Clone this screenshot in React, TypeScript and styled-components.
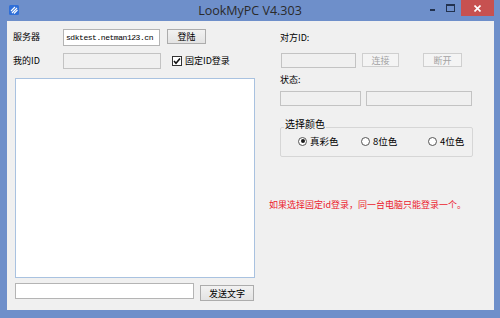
import React, { useState } from 'react';
import styled, { createGlobalStyle } from 'styled-components';

const GlobalStyle = createGlobalStyle`
  html, body {
    margin: 0;
    padding: 0;
    background: #ffffff;
  }
  body {
    font-family: "Noto Sans CJK SC", "Noto Sans", sans-serif;
  }
`;

const Window = styled.div`
  width: 500px;
  height: 318px;
  background: #6e8fca;
  display: flex;
  flex-direction: column;
  box-sizing: border-box;
  overflow: hidden;
`;

const TitleBar = styled.div`
  height: 21px;
  display: flex;
  align-items: flex-start;
  position: relative;
`;

const AppIcon = styled.div`
  width: 10px;
  height: 10px;
  margin: 5px 0 0 9px;
  display: flex;
`;

const Title = styled.div`
  position: absolute;
  left: 0;
  right: 0;
  top: 3px;
  text-align: center;
  font-family: "Open Sans", "Noto Sans", sans-serif;
  font-size: 12.5px;
  line-height: 15px;
  color: #2a2a2a;
  pointer-events: none;
`;

const Controls = styled.div`
  margin-left: auto;
  margin-right: 6px;
  display: flex;
  align-items: flex-start;
  position: relative;
  z-index: 1;
`;

const CtrlButton = styled.div<{ w: number; danger?: boolean }>`
  width: ${({ w }) => w}px;
  height: 16px;
  display: flex;
  align-items: center;
  justify-content: center;
  background: ${({ danger }) => (danger ? '#c75150' : 'transparent')};
  color: #ffffff;
`;

const MinGlyph = styled.div`
  width: 5px;
  height: 2px;
  margin-top: 4px;
  background: #22324f;
`;

const MaxGlyph = styled.div`
  width: 7px;
  height: 5px;
  margin-top: -1px;
  border: 1px solid #22324f;
  border-top-width: 2px;
`;

const Client = styled.div`
  flex: 1;
  margin: 0 6px 8px 7px;
  background: #f0f0f0;
  display: flex;
  font-size: 9px;
  color: #000;
`;

const LeftPane = styled.div`
  width: 248px;
  padding: 8px 0 0 6px;
  box-sizing: border-box;
  display: flex;
  flex-direction: column;
`;

const RightPane = styled.div`
  flex: 1;
  padding: 9px 0 0 25px;
  display: flex;
  flex-direction: column;
`;

const Row = styled.div<{ gap?: number; mt?: number }>`
  display: flex;
  align-items: flex-start;
  gap: ${({ gap }) => gap ?? 0}px;
  margin-top: ${({ mt }) => mt ?? 0}px;
`;

const Label = styled.div<{ w?: number }>`
  width: ${({ w }) => (w ? `${w}px` : 'auto')};
  font-size: 9px;
  line-height: 12px;
  padding-top: 2px;
  white-space: nowrap;
`;

const TextBox = styled.div<{ w: number; h: number; disabled?: boolean; mono?: boolean }>`
  width: ${({ w }) => w}px;
  height: ${({ h }) => h}px;
  box-sizing: border-box;
  border: 1px solid ${({ disabled }) => (disabled ? '#c3c3c3' : '#b4b4b4')};
  background: ${({ disabled }) => (disabled ? '#f0f0f0' : '#ffffff')};
  font-family: ${({ mono }) => (mono ? '"Liberation Mono", monospace' : 'inherit')};
  font-size: 8px;
  letter-spacing: ${({ mono }) => (mono ? '-0.45px' : 'normal')};
  line-height: ${({ h }) => h - 2}px;
  padding-left: 2px;
  white-space: nowrap;
  overflow: hidden;
  color: #000;
`;

const Button = styled.div<{ w: number; h: number; disabled?: boolean; mt?: number }>`
  width: ${({ w }) => w}px;
  height: ${({ h }) => h}px;
  margin-top: ${({ mt }) => mt ?? 0}px;
  box-sizing: border-box;
  border: 1px solid ${({ disabled }) => (disabled ? '#cfcfcf' : '#acacac')};
  background: ${({ disabled }) =>
    disabled ? '#f4f4f4' : 'linear-gradient(#f2f2f2, #e3e3e3)'};
  color: ${({ disabled }) => (disabled ? '#a3a3a3' : '#000')};
  font-size: 9px;
  display: flex;
  align-items: center;
  justify-content: center;
  cursor: default;
`;

const CheckLine = styled.label`
  display: flex;
  align-items: center;
  gap: 3px;
  margin: 2px 0 0 11px;
  font-size: 9px;
  line-height: 12px;
  cursor: default;
`;

const CheckBox = styled.span`
  width: 10px;
  height: 10px;
  box-sizing: border-box;
  border: 1px solid #333;
  background: #fff;
  display: flex;
  align-items: center;
  justify-content: center;
`;

const LogArea = styled.div`
  width: 240px;
  height: 200px;
  margin: 9px 0 0 2px;
  box-sizing: border-box;
  border: 1px solid #a9c2e0;
  background: #ffffff;
`;

const GroupBox = styled.fieldset`
  width: 193px;
  height: 39px;
  margin: 12px 0 0 0;
  padding: 0;
  box-sizing: border-box;
  border: 1px solid #d6d6d6;
  border-radius: 2px;
  display: flex;
  align-items: center;
`;

const Legend = styled.legend`
  font-size: 10px;
  line-height: 11px;
  padding: 0 1px 7px 1px;
  margin-left: 3px;
`;

const RadioItem = styled.label<{ w: number; first?: boolean }>`
  width: ${({ w }) => w}px;
  display: flex;
  align-items: center;
  gap: 3px;
  margin-top: -2px;
  margin-left: ${({ first }) => (first ? 17 : 0)}px;
  font-size: 9.5px;
  cursor: default;
`;

const RadioCircle = styled.span<{ checked?: boolean }>`
  width: 9px;
  height: 9px;
  box-sizing: border-box;
  border-radius: 50%;
  border: 1px solid #555;
  background: #fff;
  display: flex;
  align-items: center;
  justify-content: center;

  &::after {
    content: '';
    width: 4px;
    height: 4px;
    border-radius: 50%;
    background: ${({ checked }) => (checked ? '#1a1a1a' : 'transparent')};
  }
`;

const Notice = styled.div`
  margin: 42px 0 0 -11px;
  font-size: 9px;
  line-height: 12px;
  color: #ec1b2e;
  white-space: nowrap;
`;

const LogoIcon = () => (
  <svg width="10" height="10" viewBox="0 0 10 10">
    <rect x="0" y="0" width="10" height="10" rx="1.5" fill="#2f6fd8" />
    <path d="M2 6 L6 2 M3 8 L8 3 M5 8.5 L8.5 5" stroke="#ffffff" strokeWidth="1.1" />
  </svg>
);

const App: React.FC = () => {
  const [color, setColor] = useState('true');
  const [fixed, setFixed] = useState(true);

  const colors = [
    { key: 'true', label: '真彩色', w: 63 },
    { key: '8', label: '8位色', w: 67 },
    { key: '4', label: '4位色', w: 40 },
  ];

  return (
    <>
      <GlobalStyle />
      <Window>
        <TitleBar>
          <AppIcon>
            <LogoIcon />
          </AppIcon>
          <Title>LookMyPC V4.303</Title>
          <Controls>
            <CtrlButton w={14}>
              <MinGlyph />
            </CtrlButton>
            <CtrlButton w={22}>
              <MaxGlyph />
            </CtrlButton>
            <CtrlButton w={33} danger>
              <svg width="7" height="7" viewBox="0 0 7 7">
                <path d="M0.5 0.5 L6.5 6.5 M6.5 0.5 L0.5 6.5" stroke="#fff" strokeWidth="1.6" />
              </svg>
            </CtrlButton>
          </Controls>
        </TitleBar>

        <Client>
          <LeftPane>
            <Row>
              <Label w={50}>服务器</Label>
              <TextBox w={97} h={17} mono>sdktest.netman123.cn</TextBox>
              <Button w={39} h={15} style={{ marginLeft: 7 }}>登陆</Button>
            </Row>
            <Row mt={7}>
              <Label w={50}>我的ID</Label>
              <TextBox w={98} h={16} disabled />
              <CheckLine onClick={() => setFixed(!fixed)}>
                <CheckBox>
                  {fixed && (
                    <svg width="8" height="8" viewBox="0 0 8 8">
                      <path d="M1 4 L3 6.3 L7 1.5" fill="none" stroke="#111" strokeWidth="1.6" />
                    </svg>
                  )}
                </CheckBox>
                固定ID登录
              </CheckLine>
            </Row>
            <LogArea />
            <Row mt={5} gap={6} style={{ marginLeft: 2 }}>
              <TextBox w={179} h={16} />
              <Button w={54} h={16} mt={2}>发送文字</Button>
            </Row>
          </LeftPane>

          <RightPane>
            <Label>对方ID:</Label>
            <Row mt={9}>
              <TextBox w={75} h={15} disabled style={{ marginLeft: 1 }} />
              <Button w={37} h={14} disabled style={{ marginLeft: 6 }}>连接</Button>
              <Button w={39} h={14} disabled style={{ marginLeft: 24 }}>断开</Button>
            </Row>
            <Label style={{ marginTop: 4 }}>状态:</Label>
            <Row mt={5} gap={5}>
              <TextBox w={81} h={15} disabled />
              <TextBox w={106} h={15} disabled />
            </Row>
            <GroupBox>
              <Legend>选择颜色</Legend>
              {colors.map((c, i) => (
                <RadioItem key={c.key} w={c.w} first={i === 0} onClick={() => setColor(c.key)}>
                  <RadioCircle checked={color === c.key} />
                  {c.label}
                </RadioItem>
              ))}
            </GroupBox>
            <Notice>如果选择固定id登录，同一台电脑只能登录一个。</Notice>
          </RightPane>
        </Client>
      </Window>
    </>
  );
};

export default App;
